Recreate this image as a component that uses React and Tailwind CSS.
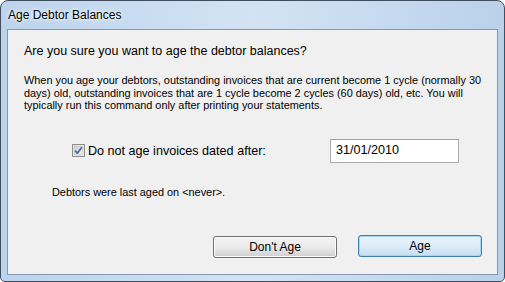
import React from 'react';

const sans = { fontFamily: '"Liberation Sans", Arial, sans-serif' };

const CheckBox = () => (
  <svg width="13" height="13" viewBox="0 0 13 13" className="shrink-0">
    <defs>
      <linearGradient id="cbg" x1="0" y1="0" x2="1" y2="1">
        <stop offset="0" stopColor="#cfcfcf" />
        <stop offset="1" stopColor="#f4f4f4" />
      </linearGradient>
    </defs>
    <rect x="0.5" y="0.5" width="12" height="12" fill="#f6f6f6" stroke="#8e8f8f" />
    <rect x="2" y="2" width="9" height="9" fill="url(#cbg)" stroke="#b2b2b2" strokeWidth="0.6" />
    <path d="M3.2 6.6 L5.3 9.2 L9.8 3.2" fill="none" stroke="#4d61a3" strokeWidth="1.7" strokeLinejoin="round" />
  </svg>
);

export default function App() {
  return (
    <div className="w-[505px] h-[282px] bg-white">
      <div className="w-[505px] h-[282px] rounded-t-[8px] rounded-b-[5px] border border-[#3f4e5e] bg-gradient-to-r from-[#bcd3ec] via-[#d3e3f4] to-[#bad1ea] flex flex-col">
        {/* Title bar */}
        <div className="h-[28px] flex items-center pl-[7px] text-[12px] text-black" style={sans}>
          <span className="[text-shadow:0_0_6px_#ffffff,0_0_3px_#ffffff]">Age Debtor Balances</span>
        </div>

        {/* Client area */}
        <div className="mx-[6px] h-[246px] border border-[#8498b3] bg-[#f0f0f0] flex flex-col text-black" style={sans}>
          <div className="pl-[16px] pt-[13px] text-[12.5px] leading-[16px]">
            Are you sure you want to age the debtor balances?
          </div>

          <div className="pl-[16px] mt-[15px] text-[10.9px] leading-[12.5px] whitespace-nowrap">
            <div>When you age your debtors, outstanding invoices that are current become 1 cycle (normally 30</div>
            <div>days) old, outstanding invoices that are 1 cycle become 2 cycles (60 days) old, etc. You will</div>
            <div>typically run this command only after printing your statements.</div>
          </div>

          <div className="flex items-start mt-[27px] pl-[64px]">
            <div className="flex items-start w-[258px] pt-[5px] gap-[3px]">
              <CheckBox />
              <span className="text-[12.6px] leading-[16px] -mt-[1px]">Do not age invoices dated after:</span>
            </div>
            <div className="w-[129px] h-[24px] bg-white border border-[#abadb3] border-t-[#9ea3ad] pl-[5px] pt-[2px] text-[12.6px] leading-[16px]">
              31/01/2010
            </div>
          </div>

          <div className="pl-[44px] mt-[23px] text-[10.9px] leading-[13px]">
            Debtors were last aged on &lt;never&gt;.
          </div>

          <div className="flex justify-end pr-[15px] mt-[36px] gap-[21px]">
            <button className="w-[124px] h-[22px] mt-[1px] rounded-[3px] border border-[#707070] bg-gradient-to-b from-[#f2f2f2] via-[#ebebeb] to-[#cfcfcf] text-[12px] leading-[16px] shadow-[inset_0_0_0_1px_#fcfcfc]">
              Don't Age
            </button>
            <button className="w-[124px] h-[22px] rounded-[3px] border border-[#3c7fb1] bg-gradient-to-b from-[#eaf4fb] via-[#dcecf8] to-[#c5dff0] text-[12px] leading-[16px] shadow-[inset_0_0_0_1px_#a7d5f5]">
              Age
            </button>
          </div>
        </div>
      </div>
    </div>
  );
}
